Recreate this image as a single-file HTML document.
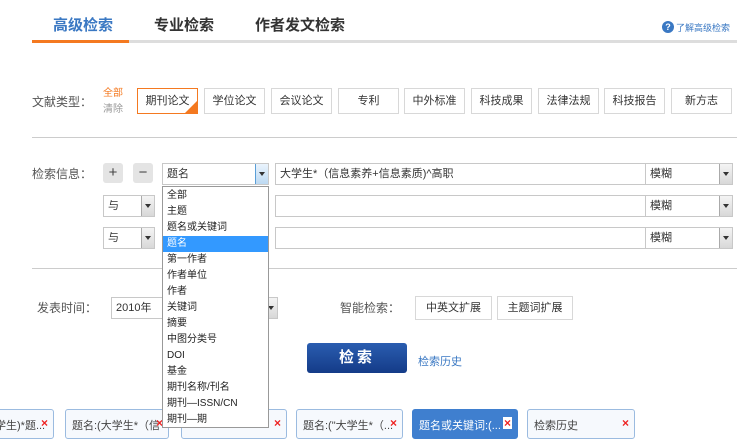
<!DOCTYPE html>
<html><head><meta charset="utf-8"><style>
*{margin:0;padding:0;box-sizing:border-box}
body{width:743px;height:432px;overflow:hidden;background:#fff;font-family:"Liberation Sans","Noto Sans CJK SC",sans-serif;font-size:11px;color:#333;position:relative}
.a{position:absolute;white-space:nowrap}
.tab{font-size:15px;font-weight:bold;color:#333;top:14px}
.btn{position:absolute;top:88px;height:26px;width:61px;border:1px solid #d8d8d8;background:#fff;text-align:center;line-height:24px;font-size:11px;color:#333}
.sep{position:absolute;left:32px;width:705px;height:1px;background:#ccc}
.sel{position:absolute;border:1px solid #c8c8c8;background:#fff;height:22px;line-height:20px;padding-left:4px}
.arr{position:absolute;right:0;top:0;width:13px;height:20px;background:linear-gradient(#f4f4f4,#d8d8d8);border-left:1px solid #aaa}
.arr:after{content:"";position:absolute;left:3px;top:8px;border:3px solid transparent;border-top:4px solid #333}
.pm{position:absolute;top:163px;width:20px;height:20px;background:#e4e4e4;border-radius:3px;text-align:center;line-height:20px;font-size:15px;color:#444}
.item{height:16px;line-height:16px;padding-left:4px;font-size:10px;color:#222}
.tag{position:absolute;top:409px;height:30px;border:1px solid #9bbbe0;border-radius:3px;background:#f6f9fd;padding:7px 6px;font-size:11px;color:#444;overflow:hidden}
.x{color:#e22;position:absolute;right:5px;top:7px;font-size:12px;line-height:12px;font-weight:bold}
</style></head><body>
<div class="a tab" style="left:53px;color:#3a78c3">高级检索</div>
<div class="a tab" style="left:154px">专业检索</div>
<div class="a tab" style="left:255px">作者发文检索</div>
<div class="a" style="left:32px;top:40px;width:705px;height:3px;background:#ddd"></div>
<div class="a" style="left:32px;top:40px;width:97px;height:3px;background:#f47920"></div>
<div class="a" style="left:662px;top:21px;width:12px;height:12px;border-radius:6px;background:#3a78c3;color:#fff;font-size:9px;text-align:center;line-height:12px;font-weight:bold">?</div>
<div class="a" style="left:676px;top:21px;font-size:9px;color:#3a78c3">了解高级检索</div>

<div class="a" style="left:32px;top:93px;font-size:12px;color:#555">文献类型：</div>
<div class="a" style="left:103px;top:84px;font-size:10px;color:#f47920">全部</div>
<div class="a" style="left:103px;top:100px;font-size:10px;color:#999">清除</div>
<div class="btn" style="left:137px;border-color:#f47920">期刊论文<span style="position:absolute;right:0;bottom:0;border:6px solid transparent;border-right-color:#f47920;border-bottom-color:#f47920"></span></div>
<div class="btn" style="left:204px">学位论文</div>
<div class="btn" style="left:271px">会议论文</div>
<div class="btn" style="left:338px">专利</div>
<div class="btn" style="left:404px">中外标准</div>
<div class="btn" style="left:471px">科技成果</div>
<div class="btn" style="left:538px">法律法规</div>
<div class="btn" style="left:604px">科技报告</div>
<div class="btn" style="left:671px">新方志</div>
<div class="sep" style="top:137px"></div>

<div class="a" style="left:32px;top:165px;font-size:12px;color:#555">检索信息：</div>
<div class="pm" style="left:103px">+</div>
<div class="pm" style="left:133px">−</div>
<div class="sel" style="left:162px;top:163px;width:107px">题名<div class="arr" style="background:linear-gradient(#eaf4fd,#bcd9f2);border-left-color:#5a9fd8"></div></div>
<div class="sel" style="left:275px;top:163px;width:458px">大学生*（信息素养+信息素质)^高职</div>
<div class="sel" style="left:645px;top:163px;width:88px">模糊<div class="arr"></div></div>
<div class="sel" style="left:103px;top:195px;width:52px">与<div class="arr"></div></div>
<div class="sel" style="left:275px;top:195px;width:458px"></div>
<div class="sel" style="left:645px;top:195px;width:88px">模糊<div class="arr"></div></div>
<div class="sel" style="left:103px;top:227px;width:52px">与<div class="arr"></div></div>
<div class="sel" style="left:275px;top:227px;width:458px"></div>
<div class="sel" style="left:645px;top:227px;width:88px">模糊<div class="arr"></div></div>
<div class="sep" style="top:268px"></div>

<div class="a" style="left:37px;top:299px;font-size:12px;color:#555">发表时间：</div>
<div class="sel" style="left:111px;top:297px;width:167px">2010年<div class="arr"></div></div>
<div class="a" style="left:340px;top:299px;font-size:12px;color:#555">智能检索：</div>
<div class="btn" style="left:415px;top:296px;width:77px;height:24px;line-height:22px">中英文扩展</div>
<div class="btn" style="left:497px;top:296px;width:76px;height:24px;line-height:22px">主题词扩展</div>
<div class="a" style="left:307px;top:343px;width:100px;height:30px;border-radius:3px;background:linear-gradient(#2a5db0,#143b88);color:#fff;font-weight:bold;font-size:15px;text-align:center;line-height:30px;letter-spacing:3px">检索</div>
<div class="a" style="left:418px;top:353px;font-size:11px;color:#3a78c3">检索历史</div>

<div class="tag" style="left:-12px;width:66px">学生)*题...<span class="x">×</span></div>
<div class="tag" style="left:65px;width:104px">题名:(大学生*（信<span class="x">×</span></div>
<div class="tag" style="left:181px;width:106px"><span class="x">×</span></div>
<div class="tag" style="left:296px;width:107px">题名:("大学生*（...<span class="x">×</span></div>
<div class="tag" style="left:412px;width:106px;background:#3f7fcf;border-color:#3f7fcf;color:#fff">题名或关键词:(...<span class="x" style="background:#fff;padding:0 1px">×</span></div>
<div class="tag" style="left:527px;width:108px">检索历史<span class="x">×</span></div>

<div class="a" style="left:162px;top:186px;width:107px;height:242px;border:1px solid #999;background:#fff;padding-top:1px">
<div class="item">全部</div><div class="item">主题</div><div class="item">题名或关键词</div>
<div class="item" style="background:#3399ff;color:#fff">题名</div>
<div class="item">第一作者</div><div class="item">作者单位</div><div class="item">作者</div><div class="item">关键词</div><div class="item">摘要</div><div class="item">中图分类号</div><div class="item">DOI</div><div class="item">基金</div><div class="item">期刊名称/刊名</div><div class="item">期刊—ISSN/CN</div><div class="item">期刊—期</div>
</div>
</body></html>
